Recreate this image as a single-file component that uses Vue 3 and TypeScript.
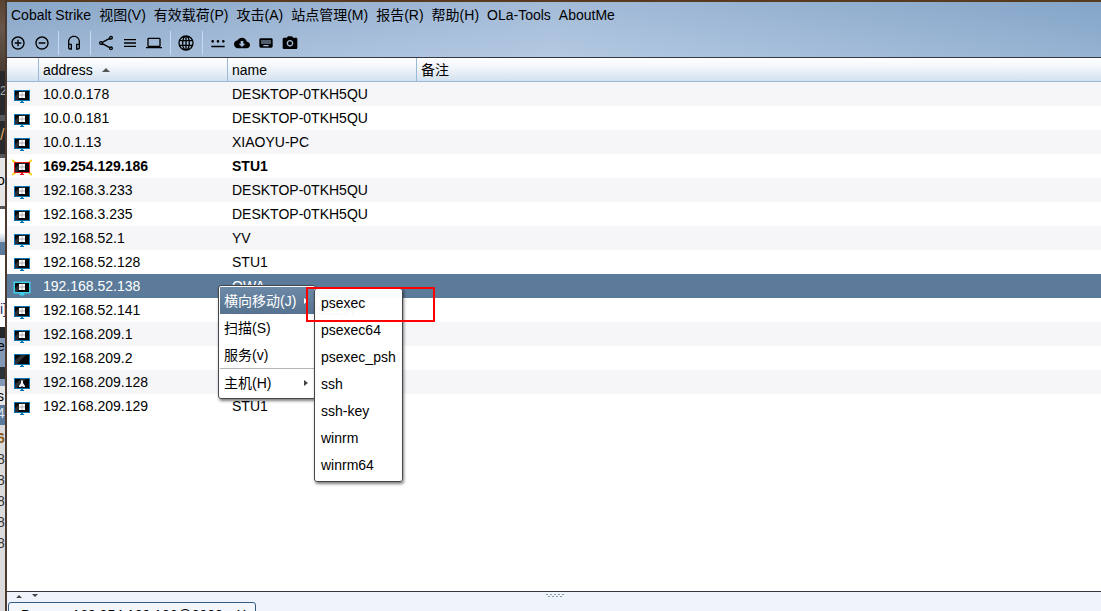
<script setup lang="ts">
import { ref } from 'vue'

type HostKind = 'windows' | 'owned' | 'unknown' | 'linux'

interface Host {
  address: string
  name: string
  kind: HostKind
}

const menus: string[] = [
  'Cobalt Strike', '视图(V)', '有效载荷(P)', '攻击(A)', '站点管理(M)',
  '报告(R)', '帮助(H)', 'OLa-Tools', 'AboutMe',
]

const hosts: Host[] = [
  { address: '10.0.0.178', name: 'DESKTOP-0TKH5QU', kind: 'windows' },
  { address: '10.0.0.181', name: 'DESKTOP-0TKH5QU', kind: 'windows' },
  { address: '10.0.1.13', name: 'XIAOYU-PC', kind: 'windows' },
  { address: '169.254.129.186', name: 'STU1', kind: 'owned' },
  { address: '192.168.3.233', name: 'DESKTOP-0TKH5QU', kind: 'windows' },
  { address: '192.168.3.235', name: 'DESKTOP-0TKH5QU', kind: 'windows' },
  { address: '192.168.52.1', name: 'YV', kind: 'windows' },
  { address: '192.168.52.128', name: 'STU1', kind: 'windows' },
  { address: '192.168.52.138', name: 'OWA', kind: 'windows' },
  { address: '192.168.52.141', name: 'DESKTOP-J20BEH', kind: 'windows' },
  { address: '192.168.209.1', name: 'YV', kind: 'windows' },
  { address: '192.168.209.2', name: '', kind: 'unknown' },
  { address: '192.168.209.128', name: '', kind: 'linux' },
  { address: '192.168.209.129', name: 'STU1', kind: 'windows' },
]

interface Tool {
  label: string
  path: string
  gapBefore?: boolean
  outline?: boolean
}

const tools: Tool[] = [
  { label: 'Connect', path: 'M13 7h-2v4H7v2h4v4h2v-4h4v-2h-4V7zm-1-5C6.500 2 2 6.500 2 12s4.500 10 10 10 10-4.500 10-10S17.500 2 12 2zm0 18c-4.400 0-8-3.600-8-8s3.600-8 8-8 8 3.600 8 8-3.600 8-8 8z' },
  { label: 'Disconnect', path: 'M7 11v2h10v-2H7zm5-9C6.500 2 2 6.500 2 12s4.500 10 10 10 10-4.500 10-10S17.500 2 12 2zm0 18c-4.400 0-8-3.600-8-8s3.600-8 8-8 8 3.600 8 8-3.600 8-8 8z' },
  { label: 'Listeners', gapBefore: true, path: 'M12 1c-5 0-9 4-9 9v9c0 1.700 1.300 3 3 3h3v-9H5v-3c0-3.900 3.100-7 7-7s7 3.100 7 7v3h-4v9h3c1.700 0 3-1.300 3-3v-9c0-5-4-9-9-9zM7 15v5H6c-.6 0-1-.4-1-1v-4zm12 4c0 .6-.4 1-1 1h-1v-5h2z' },
  { label: 'Pivot graph', gapBefore: true, outline: true, path: 'M6.500 11 17.500 5M6.500 13l11 6M2.500 12a2 2 0 1 0 4 0 2 2 0 1 0-4 0M17.500 4a2 2 0 1 0 4 0 2 2 0 1 0-4 0M17.500 20a2 2 0 1 0 4 0 2 2 0 1 0-4 0' },
  { label: 'Session table', path: 'M3 18h18v-2H3v2zm0-5h18v-2H3v2zm0-7v2h18V6H3z' },
  { label: 'Target table', path: 'M20 18c1.100 0 2-.9 2-2V6c0-1.100-.9-2-2-2H4c-1.100 0-2 .9-2 2v10c0 1.100.9 2 2 2H0v2h24v-2h-4zM4 6h16v10H4V6z' },
  { label: 'Web sites', gapBefore: true, outline: true, path: 'M1.500 12a10.500 10.500 0 1 0 21 0 10.500 10.500 0 1 0-21 0M7 12a5 10.500 0 1 0 10 0 5 10.500 0 1 0-10 0M12 1.500v21M2.500 8.500h19M2.500 15.500h19' },
  { label: 'Credentials', gapBefore: true, path: 'M2 16h20v2.500H2zM4 7.500a2 2 0 1 0 0 4 2 2 0 0 0 0-4zm8 0a2 2 0 1 0 0 4 2 2 0 0 0 0-4zm8 0a2 2 0 1 0 0 4 2 2 0 0 0 0-4z' },
  { label: 'Downloads', path: 'M19.350 10.040C18.670 6.590 15.640 4 12 4 9.110 4 6.600 5.640 5.350 8.040 2.340 8.360 0 10.910 0 14c0 3.310 2.690 6 6 6h13c2.760 0 5-2.240 5-5 0-2.640-2.050-4.780-4.650-4.960zM17 13l-5 5-5-5h3V9h4v4h3z' },
  { label: 'Keystrokes', path: 'M20 5H4c-1.100 0-2 .9-2 2v10c0 1.100.9 2 2 2h16c1.100 0 2-.9 2-2V7c0-1.100-.9-2-2-2zm-9 3h2v2h-2V8zm0 3h2v2h-2v-2zM8 8h2v2H8V8zm0 3h2v2H8v-2zm-1 2H5v-2h2v2zm0-3H5V8h2v2zm9 7H8v-2h8v2zm0-4h-2v-2h2v2zm0-3h-2V8h2v2zm3 3h-2v-2h2v2zm0-3h-2V8h2v2z' },
  { label: 'Screenshots', path: 'M9 2 7.170 4H3c-1.100 0-2 .9-2 2v13c0 1.100.9 2 2 2h18c1.100 0 2-.9 2-2V6c0-1.100-.9-2-2-2h-4.170L15 2H9zm3 15.500c-2.760 0-5-2.240-5-5s2.240-5 5-5 5 2.240 5 5-2.240 5-5 5zm0-8a3 3 0 1 0 0 6 3 3 0 0 0 0-6z' },
]

const lateral: string[] = ['psexec', 'psexec64', 'psexec_psh', 'ssh', 'ssh-key', 'winrm', 'winrm64']
const selected = ref('192.168.52.138')
</script>

<template>
  <div class="desktop">
    <aside class="behind" aria-hidden="true">
      <div class="b wood"></div>
      <div class="b dark">2</div>
      <div class="b dark slash">/</div>
      <div class="b pale">o</div>
      <div class="b white"></div>
      <div class="b steel"></div>
      <div class="b white code">i]</div>
      <div class="b night"></div>
      <div class="b sky">e</div>
      <div class="b pale small">s</div>
      <div class="b steel four">4</div>
      <div class="b list">
        <span class="amber">6</span><span>8</span><span>8</span><span>8</span><span>8</span><span>8</span>
      </div>
    </aside>

    <main class="window">
      <header class="top">
        <nav class="menubar">
          <button v-for="m in menus" :key="m" type="button">{{ m }}</button>
        </nav>
        <div class="toolbar">
          <template v-for="t in tools" :key="t.label">
            <span v-if="t.gapBefore" class="sep"></span>
            <button type="button" :aria-label="t.label">
              <svg viewBox="0 0 24 24" :class="{ outline: t.outline }"><path :d="t.path" fill-rule="evenodd" /></svg>
            </button>
          </template>
        </div>
      </header>

      <section class="targets">
        <table>
          <colgroup>
            <col class="c-icon" /><col class="c-text" /><col class="c-text" /><col />
          </colgroup>
          <thead>
            <tr>
              <th></th>
              <th>address <svg class="sort" viewBox="0 0 8 4"><path d="M0 4 4 0l4 4z" /></svg></th>
              <th>name</th>
              <th>备注</th>
            </tr>
          </thead>
          <tbody>
            <tr
              v-for="h in hosts"
              :key="h.address"
              :class="{ selected: h.address === selected, owned: h.kind === 'owned' }"
              @click="selected = h.address"
            >
              <td>
                <svg class="host" viewBox="0 0 20 18">
                  <path v-if="h.kind === 'owned'" d="M0 1l4 3M20 1l-4 3M0 16l4-3M20 16l-4-3" class="bolt" />
                  <rect class="frame" x="2" y="3" width="16" height="11" />
                  <rect x="3" y="4" width="14" height="9" fill="#050608" />
                  <path d="M3 13V9l6-5h5L5 13z" fill="#2b2d31" />
                  <path class="frame" d="M9 14h2v1h1v1H8v-1h1z" />
                  <path v-if="h.kind === 'windows' || h.kind === 'owned'" d="M7 5h6v6H7z" fill="#a8a8a8" />
                  <path v-if="h.kind === 'windows' || h.kind === 'owned'" d="M7 5h2.600v2.600H7zM10.400 5H13v2.600h-2.600zM7 8.400h2.600V11H7zM10.400 8.400H13V11h-2.600z" fill="#fff" />
                  <path v-if="h.kind === 'linux'" d="M10 5l1 1v2l2 3v1h-2l-1-1-1 1H7v-1l2-3V6z" fill="#f2f2f2" />
                </svg>
              </td>
              <td>{{ h.address }}</td>
              <td>{{ h.name }}</td>
              <td></td>
            </tr>
          </tbody>
        </table>

        <div class="popup hostmenu" role="menu">
          <button type="button" role="menuitem" class="active">横向移动(J)<span class="more"></span></button>
          <button type="button" role="menuitem">扫描(S)</button>
          <button type="button" role="menuitem">服务(v)</button>
          <hr />
          <button type="button" role="menuitem">主机(H)<span class="more"></span></button>
        </div>
        <div class="popup submenu" role="menu">
          <button v-for="l in lateral" :key="l" type="button" role="menuitem">{{ l }}</button>
        </div>
        <div class="marker"></div>
      </section>

      <footer class="dock">
        <div class="divider">
          <svg class="arrows" viewBox="0 0 24 4"><path d="M1 4l3-3 3 3zM17 0h6l-3 3z" /></svg>
          <svg class="grip" viewBox="0 0 20 4">
            <path d="M1 0h2v1H1zM5 0h2v1H5zM9 0h2v1H9zM13 0h2v1h-2zM17 0h2v1h-2zM3 2h2v1H3zM7 2h2v1H7zM11 2h2v1h-2zM15 2h2v1h-2z" />
          </svg>
        </div>
        <div class="tab"><span>Beacon 169.254.129.186@2908</span><button type="button" aria-label="Close tab">X</button></div>
      </footer>
    </main>
  </div>
</template>

<style>
body {
  overflow: hidden;
}
</style>

<style scoped>
.desktop {
  display: flex;
  height: 100vh;
  font: 14px/16px "Liberation Sans", "Noto Sans CJK SC", sans-serif;
  color: #000;
  background: #fff;
}
* {
  box-sizing: border-box;
}
button {
  margin: 0;
  padding: 0;
  border: 0;
  background: none;
  font: inherit;
  color: inherit;
  text-align: left;
  white-space: nowrap;
}

.behind {
  flex: none;
  width: 7px;
  display: flex;
  flex-direction: column;
  overflow: hidden;
  border-right: 2px solid #4a3a30;
  background: #55565c;
}
.b {
  flex: none;
  overflow: hidden;
}
.wood {
  height: 71px;
  background: linear-gradient(#5a4231, #67564a 40%, #4b3d33);
}
.dark {
  height: 44px;
  padding-top: 12px;
  margin-bottom: 6px;
  background: #29292d;
  color: #aaa;
  font-size: 12px;
}
.dark.slash {
  height: 33px;
  padding-top: 6px;
  margin-bottom: 4px;
  color: #d7a05a;
  font-size: 16px;
}
.pale {
  height: 48px;
  padding-top: 14px;
  background: #e6e6e6;
  margin-bottom: 3px;
  text-indent: -3px;
}
.white {
  height: 33px;
  background: linear-gradient(#fff 70%, #b9c6d3);
}
.steel {
  height: 13px;
  background: #5c7a9b;
}
.white.code {
  height: 72px;
  padding-top: 46px;
  background: #fff;
  color: #1d2d70;
}
.night {
  height: 11px;
  background: #25262a;
}
.sky {
  height: 48px;
  background: linear-gradient(#8298b4 60%, #2b2f36 60%, #2b2f36 85%, #8298b4 85%);
  text-indent: -3px;
}
.pale.small {
  height: 19px;
  margin: 0;
  padding: 2px 0 0;
}
.steel.four {
  height: 20px;
  color: #dfe6ee;
  text-indent: -3px;
}
.list {
  flex: 1;
  display: flex;
  flex-direction: column;
  gap: 5px;
  padding-top: 5px;
  background: #dcdcdc;
  color: #333;
  text-indent: -3px;
}
.amber {
  color: #8a5a14;
  font-weight: bold;
}

.window {
  flex: 1;
  min-width: 0;
  display: flex;
  flex-direction: column;
}
.top {
  flex: none;
  height: 58px;
  border-top: 2px solid #5a3a1e;
  border-bottom: 1px solid #34383e;
  background:
    linear-gradient(90deg, rgba(140, 168, 200, 0.5), rgba(182, 202, 226, 0.6) 50%, rgba(130, 165, 200, 0.6)),
    linear-gradient(#86a4c6, #b2c8e2);
}
.menubar {
  display: flex;
  gap: 8px;
  padding: 5px 3px 5px 4px;
}
.menubar button {
  height: 16px;
}
.toolbar {
  display: flex;
  height: 24px;
  margin: 3px 0 0 -1px;
}
.toolbar button {
  width: 24px;
  height: 24px;
  padding: 4px;
}
.toolbar svg {
  display: block;
  width: 16px;
  height: 16px;
}
.outline {
  fill: none;
  stroke: #000;
  stroke-width: 2;
  overflow: visible;
}
.sep {
  width: 8px;
  border-right: 3px solid transparent;
  background: linear-gradient(90deg, transparent 4px, #c9daee 4px);
  background-clip: padding-box;
}

.targets {
  position: relative;
  flex: 1;
  min-height: 0;
  background: #fff;
}
table {
  width: 100%;
  table-layout: fixed;
  border-collapse: separate;
  border-spacing: 0;
}
.c-icon {
  width: 32px;
}
.c-text {
  width: 189px;
}
th {
  height: 24px;
  padding: 0 4px;
  border-right: 1px solid #9ab9d6;
  border-bottom: 1px solid #9ab9d6;
  background: linear-gradient(#fff, #f2f6fb 40%, #d3e1ef);
  font-weight: normal;
  text-align: left;
}
th:last-child {
  border-right: 0;
}
.sort {
  width: 8px;
  height: 4px;
  margin: 0 0 3px 5px;
  fill: #555;
}
td {
  height: 24px;
  padding: 0 4px;
  white-space: nowrap;
}
td:first-child {
  padding: 3px 0 0 5px;
}
tbody tr:nth-child(odd) {
  background: #f6f6f9;
}
tbody tr.selected {
  background: #5c7a99;
  color: #fff;
}
tr.owned {
  font-weight: bold;
}
.host {
  display: block;
  width: 20px;
  height: 18px;
}
.frame {
  fill: #0873b4;
}
.owned .frame {
  fill: #e0121b;
}
.selected .frame {
  fill: #3cd2ee;
  stroke: #3cd2ee;
}
.bolt {
  stroke: #f5d31c;
  stroke-width: 2;
}

.popup {
  position: absolute;
  display: flex;
  flex-direction: column;
  border: 1px solid #44484d;
  border-radius: 3px;
  background: rgba(255, 255, 255, 0.97);
  box-shadow: 1px 2px 3px rgba(0, 0, 0, 0.5);
}
.hostmenu {
  left: 211px;
  top: 227px;
  width: 98px;
  padding: 1px 1px 2px;
}
.hostmenu button {
  display: flex;
  align-items: center;
  justify-content: space-between;
  height: 27px;
  padding: 0 6px 0 4px;
}
.hostmenu .active {
  background: linear-gradient(#6d89a8, #55728f);
  color: #fff;
}
.hostmenu hr {
  width: 100%;
  height: 1px;
  margin: 0;
  border: 0;
  background: #b5b5b5;
}
.more {
  border: 3px solid transparent;
  border-left: 4px solid #444;
  border-right: 0;
}
.active .more {
  border-left-color: #fff;
}
.submenu {
  left: 307px;
  top: 230px;
  width: 89px;
  padding: 0 0 3px;
}
.submenu button {
  height: 27px;
  padding-left: 6px;
}
.marker {
  position: absolute;
  left: 299px;
  top: 229px;
  width: 129px;
  height: 35px;
  border: 2px solid #f00;
  pointer-events: none;
}

.dock {
  flex: none;
  height: 20px;
  overflow: hidden;
  border-top: 1px solid #34383e;
  background: #eff3fb;
}
.divider {
  display: grid;
  grid-template-columns: 1fr auto 1fr;
  height: 10px;
  padding: 2px 7px 2px 8px;
}
.arrows {
  width: 24px;
  height: 4px;
  fill: #444;
}
.grip {
  width: 20px;
  height: 4px;
  fill: #8a97a8;
}
.tab {
  display: inline-flex;
  gap: 14px;
  margin-left: 1px;
  padding: 4px 9px 8px 12px;
  border: 1px solid #315a80;
  border-radius: 3px;
  background: #f3f6fc;
}
</style>
